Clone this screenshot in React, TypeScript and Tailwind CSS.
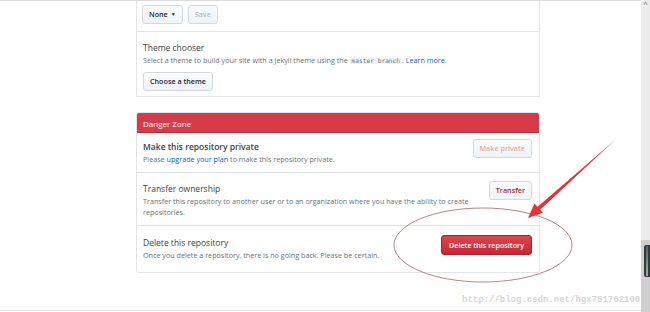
import React from "react";

const font = { fontFamily: '"Open Sans", "Noto Sans", sans-serif' };

const Btn = ({ children, className = "" }: { children: React.ReactNode; className?: string }) => (
  <button
    className={`shrink-0 whitespace-nowrap h-[19px] px-[6px] rounded-[3px] border border-[#d6d8da] bg-gradient-to-b from-[#fafbfc] to-[#eff3f6] text-[7.2px] font-semibold leading-none ${className}`}
  >
    {children}
  </button>
);

const DangerRow = ({
  title,
  children,
  action,
  pad,
  last = false,
  titleWeight = "font-semibold",
}: {
  title: string;
  children: React.ReactNode;
  action: React.ReactNode;
  pad: string;
  last?: boolean;
  titleWeight?: string;
}) => (
  <div className={`flex items-start justify-between pl-[6px] pr-[7px] ${last ? "" : "border-b border-[#e1e4e8]"}`}>
    <div className={`${pad} w-[336px]`}>
      <div className={`text-[8.5px] ${titleWeight} text-[#3a3f44] leading-[12px]`}>{title}</div>
      <div className="text-[7.2px] text-[#6a737d] leading-[11px] mt-[1px]">{children}</div>
    </div>
    {action}
  </div>
);

export default function App() {
  return (
    <div className="relative w-[650px] h-[312px] overflow-hidden bg-white flex" style={font}>
      <div className="flex-1 flex flex-col border-t border-[#dcdcdc]">
        <div className="ml-[136px] w-[404px] flex-1">
          {/* GitHub Pages card (top part cut off) */}
          <div className="border-x border-b border-[#e1e4e8]">
            <div className="h-[31px] border-b border-[#e1e4e8] pl-[5px] pt-[4px] flex gap-[5px]">
              <Btn className="text-[#24292e] flex items-center gap-[3px]">
                None
                <span className="text-[5px]">▼</span>
              </Btn>
              <Btn className="text-[#b8bcc0] font-normal">Save</Btn>
            </div>
            <div className="pl-[6px] pt-[10px] pb-[5px]">
              <div className="text-[8.5px] font-normal text-[#3a3f44] leading-[12px]">Theme chooser</div>
              <div className="text-[7.2px] text-[#6a737d] leading-[11px] mt-[1px]">
                Select a theme to build your site with a Jekyll theme using the{" "}
                <code className="text-[6.2px] bg-[#f3f4f6] px-[2px]" style={{ fontFamily: '"DejaVu Sans Mono", monospace' }}>
                  master branch
                </code>
                . <span className="text-[#0366d6]">Learn more</span>.
              </div>
              <Btn className="mt-[6px] text-[#24292e]">Choose a theme</Btn>
            </div>
          </div>

          {/* Danger zone */}
          <div className="mt-[15px] border border-[#e1e4e8] rounded-[3px] overflow-hidden">
            <div className="h-[21px] bg-[#d73a49] text-white text-[8px] leading-[21px] pl-[6px] border border-[#cb2431] -m-px mb-0">
              Danger Zone
            </div>
            <DangerRow
              title="Make this repository private"
              pad="pt-[8px] pb-[7px]"
              action={<Btn className="mt-[6px] text-[#e3a9b0] font-normal">Make private</Btn>}
            >
              Please <span className="text-[#0366d6]">upgrade your plan</span> to make this repository private.
            </DangerRow>
            <DangerRow
              title="Transfer ownership"
              titleWeight="font-normal"
              pad="pt-[10px] pb-[7px]"
              action={<Btn className="mt-[8px] text-[#a5283a]">Transfer</Btn>}
            >
              Transfer this repository to another user or to an organization where you have the ability to create
              repositories.
            </DangerRow>
            <DangerRow
              title="Delete this repository"
              titleWeight="font-normal"
              pad="pt-[11px] pb-[11px]"
              last
              action={
                <button className="shrink-0 whitespace-nowrap mt-[9px] h-[20px] px-[7px] rounded-[3px] border border-[#b31d28] bg-gradient-to-b from-[#de4450] to-[#cb2431] text-white text-[7.2px] font-semibold leading-none">
                  Delete this repository
                </button>
              }
            >
              Once you delete a repository, there is no going back. Please be certain.
            </DangerRow>
          </div>
        </div>
        <div className="h-[2px] border-t border-[#e1e1e1]" />
      </div>

      {/* window scrollbar */}
      <div className="w-[9px] flex flex-col bg-[#ececec]">
        <div className="h-[10px] text-[7px] leading-[10px] text-center text-[#555]">^</div>
        <div className="flex-1" />
        <div className="h-[72px] bg-[#cfcfcf] pt-[5px] pl-[3px]">
          <div className="h-[32px] w-[6px] rounded-l-[2px] bg-[#2e3a48] p-[1px]">
            <div className="h-full w-[2px] ml-[1px] bg-gradient-to-b from-[#4a6a60] to-[#9fbf70]" />
          </div>
        </div>
      </div>

      {/* annotation: ellipse and arrow */}
      <svg className="absolute inset-0 pointer-events-none" width="650" height="312">
        <ellipse cx="483" cy="245" rx="89" ry="37" fill="none" stroke="#b9726c" strokeWidth="0.9" />
        <polygon points="615,140 539.7,210.2 537.1,207.2" fill="#e63232" />
        <polygon points="528,218 543,212.8 534.5,203.4" fill="#e63232" />
      </svg>

      <div
        className="absolute left-[462px] top-[294px] text-[9px] font-bold text-[#d6d6d6] whitespace-nowrap"
        style={{ fontFamily: '"Liberation Mono", monospace' }}
      >
        http://blog.csdn.net/hgx751762100
      </div>
    </div>
  );
}
